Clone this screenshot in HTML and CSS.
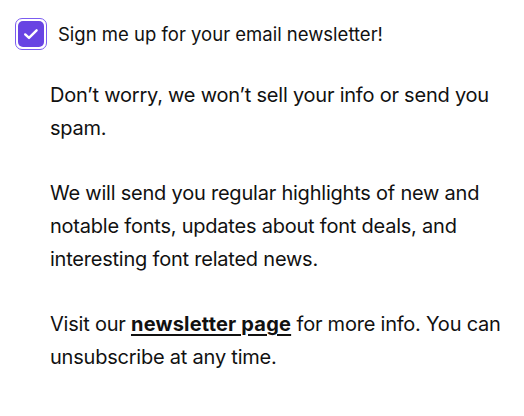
FILE: index.html
```html
<!DOCTYPE html>
<html>
<head>
<meta charset="utf-8">
<link rel="stylesheet" href="styles.css">
</head>
<body>
<div class="signup">
  <label class="check-row">
    <span class="checkbox">
      <span class="checkbox-fill">
        <svg viewBox="0 0 16 16" width="16" height="16"><path d="M2.2 8.4 L6 11.9 L13.6 4.3" fill="none" stroke="#fff" stroke-width="2.4" stroke-linecap="round" stroke-linejoin="round"/></svg>
      </span>
    </span>
    <span class="check-label">Sign me up for your email newsletter!</span>
  </label>
  <div class="info">
    <p>Don’t worry, we won’t sell your info or send you spam.</p>
    <p>We will send you regular highlights of new and notable fonts, updates about font deals, and interesting font related news.</p>
    <p>Visit our <a href="#">newsletter page</a> for more info. You can unsubscribe at any time.</p>
  </div>
</div>
</body>
</html>
```
FILE: styles.css
```css
html, body {
  margin: 0;
  padding: 0;
  background: #fff;
}
body {
  font-family: Inter, "Noto Sans", sans-serif;
  color: #111;
}
.signup {
  padding: 18px 12px 0 15px;
}
.check-row {
  display: flex;
  align-items: center;
  gap: 11px;
}
.checkbox {
  box-sizing: border-box;
  width: 32px;
  height: 32px;
  border: 1.5px solid #7b5cf0;
  border-radius: 7px;
  padding: 2px;
  display: flex;
}
.checkbox-fill {
  flex: 1;
  background: #6844e3;
  border-radius: 5px;
  display: flex;
  align-items: center;
  justify-content: center;
}
.checkbox-fill svg {
  display: block;
}
.check-label {
  font-size: 18.5px;
  letter-spacing: 0;
}
.info {
  padding-left: 35px;
  padding-top: 29px;
  font-size: 20px;
  line-height: 32.75px;
  letter-spacing: -0.22px;
}
.info p {
  margin: 0 0 32.75px;
}
.info a {
  color: #111;
  font-weight: 700;
  letter-spacing: 0.2px;
  text-decoration: underline;
  text-underline-offset: 3px;
  text-decoration-thickness: 2px;
}
```
